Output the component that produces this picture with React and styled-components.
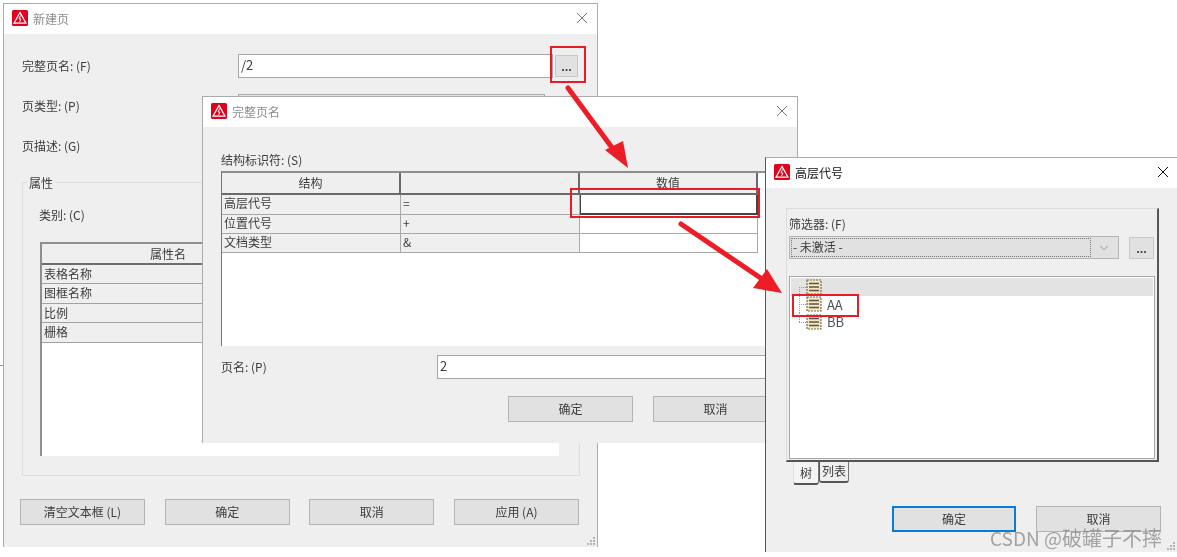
import styled, { createGlobalStyle } from 'styled-components'
import { ChevronDown } from 'lucide-react'

const GlobalStyle = createGlobalStyle`
  html, body {
    margin: 0;
    background: #fff;
  }
  body {
    font-family: "Noto Sans CJK SC", "Liberation Sans", sans-serif;
    font-size: 12px;
    color: #3c3c3c;
  }
`

const Logo = () => (
  <LogoSvg viewBox="0 0 16 16">
    <rect width="16" height="16" rx="1.5" fill="#e2001a" />
    <path d="M8 2.4 14 13.2H2Z" fill="none" stroke="#fff" strokeWidth="1.2" />
    <path d="M8.6 5.4 7 9h2l-1.4 3" fill="none" stroke="#fff" strokeWidth="0.9" />
  </LogoSvg>
)

const CloseIcon = ({ active }) => (
  <CloseSvg viewBox="0 0 12 12">
    <path d="M1 1 11 11M11 1 1 11" stroke={active ? '#111' : '#777'} strokeWidth="1" fill="none" />
  </CloseSvg>
)

const Grip = () => (
  <GripSvg viewBox="0 0 10 10">
    <path d="M8 1h2v2H8zM5 4h2v2H5zM8 4h2v2H8zM2 7h2v2H2zM5 7h2v2H5zM8 7h2v2H8z" fill="#b4b4b4" />
  </GripSvg>
)

const TreeIcon = () => (
  <TreeSvg viewBox="0 0 16 16">
    <rect x="1" y="1" width="14" height="14" fill="#f7e6b8" stroke="#6b6b6b" strokeDasharray="2 1" strokeWidth="1.2" />
    <path d="M3 4.5h10M3 8h10M3 11.5h10" stroke="#555" strokeWidth="1.5" />
  </TreeSvg>
)

const Title = ({ text, active }) => (
  <TitleBar $active={active}>
    <Logo />
    <TitleText $active={active}>{text}</TitleText>
    <CloseIcon active={active} />
  </TitleBar>
)

const App = () => {
  return (
    <>
      <GlobalStyle />
      <Desktop>
        <StrayLine />

        <Window $left={3} $top={3} $width={595} $height={544} $edge="#ababab">
          <Title text="新建页" />
          <PageForm>
            <FormRow>
              <span>完整页名: (F)</span>
              <InputWrap>
                <TextBox $width={315}>/2</TextBox>
                <DotsButton $left={2} $width={23}>...</DotsButton>
              </InputWrap>
            </FormRow>
            <FormRow>
              <span>页类型: (P)</span>
              <InputWrap>
                <TextBox $width={307} $disabled />
              </InputWrap>
            </FormRow>
            <FormRow>
              <span>页描述: (G)</span>
            </FormRow>
            <Group>
              <legend>属性</legend>
              <CategoryLabel>类别: (C)</CategoryLabel>
              <AttrTable>
                <AttrHead>属性名</AttrHead>
                {['表格名称', '图框名称', '比例', '栅格'].map((name) => (
                  <AttrRow key={name}>{name}</AttrRow>
                ))}
              </AttrTable>
            </Group>
            <FooterButtons>
              <Button>清空文本框 (L)</Button>
              <Button>确定</Button>
              <Button>取消</Button>
              <Button>应用 (A)</Button>
            </FooterButtons>
          </PageForm>
          <Grip />
        </Window>

        <Window $left={202} $top={96} $width={596} $height={347} $edge="#ababab">
          <Title text="完整页名" />
          <NameForm>
            <FieldLabel>结构标识符: (S)</FieldLabel>
            <StructTable>
              <StructGrid>
                <HeadCell>结构</HeadCell>
                <HeadCell />
                <HeadCell>数值</HeadCell>
                <BodyCell>高层代号</BodyCell>
                <BodyCell>=</BodyCell>
                <ValueCell $selected />
                <BodyCell>位置代号</BodyCell>
                <BodyCell>+</BodyCell>
                <ValueCell />
                <BodyCell>文档类型</BodyCell>
                <BodyCell>&amp;</BodyCell>
                <ValueCell />
              </StructGrid>
            </StructTable>
            <PageNameRow>
              <span>页名: (P)</span>
              <TextBox $width={340}>2</TextBox>
            </PageNameRow>
            <NameButtons>
              <Button>确定</Button>
              <Button>取消</Button>
            </NameButtons>
          </NameForm>
        </Window>

        <Window $left={765} $top={157} $width={413} $height={395} $edge="#555">
          <Title text="高层代号" active />
          <TabPane>
            <FieldLabel>筛选器: (F)</FieldLabel>
            <FilterRow>
              <Combo>
                <ComboValue>- 未激活 -</ComboValue>
                <ChevronDown size={14} color="#8a8a8a" strokeWidth={1.5} />
              </Combo>
              <DotsButton $left={10} $width={25}>...</DotsButton>
            </FilterRow>
            <Tree>
              <TreeRow $selected>
                <Connector $pos="first" />
                <TreeIcon />
              </TreeRow>
              <TreeRow>
                <Connector $pos="middle" />
                <TreeIcon />
                AA
              </TreeRow>
              <TreeRow>
                <Connector $pos="last" />
                <TreeIcon />
                BB
              </TreeRow>
            </Tree>
          </TabPane>
          <TabStrip>
            <Tab $active>树</Tab>
            <Tab>列表</Tab>
          </TabStrip>
          <DialogButtons>
            <Button $primary>确定</Button>
            <Button>取消</Button>
          </DialogButtons>
          <Grip />
        </Window>

        <Markup viewBox="0 0 1177 557">
          <g fill="none" stroke="#e81c26" strokeWidth="2">
            <rect x="551" y="47" width="34" height="35" />
            <rect x="571" y="189" width="188" height="28" />
            <rect x="793" y="295" width="65" height="21" />
          </g>
          <path d="M568 88 616 153" stroke="#ee1c25" strokeWidth="5" strokeLinecap="round" />
          <path d="M628 168 605 150 623 141Z" fill="#ee1c25" />
          <path d="M681 224 765 281" stroke="#ee1c25" strokeWidth="5" strokeLinecap="round" />
          <path d="M782 293 753 288 767 269Z" fill="#ee1c25" />
        </Markup>

        <Watermark>
          CSDN @<WatermarkCjk>破罐子不摔</WatermarkCjk>
        </Watermark>
      </Desktop>
    </>
  )
}

export default App

const Desktop = styled.div`
  position: relative;
  width: 1177px;
  height: 557px;
  overflow: hidden;
  background: #fff;
  filter: blur(0.3px);
`

const StrayLine = styled.div`
  position: absolute;
  left: 0;
  top: 365px;
  width: 3px;
  height: 1px;
  background: #999;
`

const Window = styled.section`
  position: absolute;
  left: ${(p) => p.$left}px;
  top: ${(p) => p.$top}px;
  width: ${(p) => p.$width}px;
  height: ${(p) => p.$height}px;
  box-sizing: border-box;
  display: flex;
  flex-direction: column;
  background: #efefef;
  border: 1px solid ${(p) => p.$edge};
  border-top-color: #ababab;
  border-bottom: none;
`

const TitleBar = styled.header`
  flex: none;
  box-sizing: border-box;
  height: 30px;
  display: flex;
  align-items: center;
  padding: 0 ${(p) => (p.$active ? '8px' : '9px')} 2px 8px;
  background: #fff;
`

const LogoSvg = styled.svg`
  flex: none;
  width: 16px;
  height: 16px;
`

const TitleText = styled.span`
  flex: 1;
  margin-left: 5px;
  font-size: 12px;
  color: ${(p) => (p.$active ? '#111' : '#8c8c8c')};
`

const CloseSvg = styled.svg`
  flex: none;
  width: 12px;
  height: 12px;
`

const GripSvg = styled.svg`
  position: absolute;
  right: 2px;
  bottom: 1px;
  width: 10px;
  height: 10px;
`

const PageForm = styled.div`
  display: flex;
  flex-direction: column;
  padding: 20px 0 0 18px;
`

const FormRow = styled.div`
  display: grid;
  grid-template-columns: 216px 1fr;
  align-items: center;
  height: 24px;
  margin-bottom: 16px;

  > span {
    margin-top: -2px;
  }
`

const InputWrap = styled.div`
  display: flex;
  align-items: center;
`

const TextBox = styled.div`
  box-sizing: border-box;
  width: ${(p) => p.$width}px;
  height: 24px;
  line-height: 20px;
  padding: 0 2px;
  background: ${(p) => (p.$disabled ? '#e6e6e6' : '#fff')};
  border: 1px solid #a6a6a6;
  font-size: 13px;
`

const DotsButton = styled.div`
  box-sizing: border-box;
  flex: none;
  width: ${(p) => p.$width}px;
  height: 22px;
  margin-left: ${(p) => p.$left}px;
  background: #e1e1e1;
  border: 1px solid #c8c8c8;
  text-align: center;
  line-height: 20px;
  font-size: 11px;
  font-weight: 700;
`

const Group = styled.fieldset`
  box-sizing: border-box;
  width: 558px;
  height: 302px;
  margin: 0;
  padding: 16px 0 0 17px;
  border: 1px solid #dddddd;

  legend {
    margin-left: -13px;
    padding: 0 2px;
    font-size: 12px;
    line-height: 17px;
  }
`

const CategoryLabel = styled.div`
  margin-left: -1px;
  line-height: 15px;
`

const AttrTable = styled.div`
  box-sizing: border-box;
  width: 519px;
  height: 214px;
  margin-top: 20px;
  background: #fff;
  border-left: 2px solid #8e8e8e;
  border-top: 2px solid #8e8e8e;
`

const AttrHead = styled.div`
  box-sizing: border-box;
  height: 21px;
  width: 252px;
  line-height: 19px;
  text-align: center;
  background: #efefef;
  border-bottom: 2px solid #6f6f6f;
`

const AttrRow = styled.div`
  box-sizing: border-box;
  height: 19.4px;
  line-height: 17px;
  padding-left: 2px;
  background: #efefef;
  border-bottom: 1px solid #a2a2a2;
`

const FooterButtons = styled.div`
  display: flex;
  justify-content: space-between;
  width: 559px;
  margin: 23px 0 0 -2px;
`

const Button = styled.div`
  box-sizing: border-box;
  width: ${(p) => (p.$primary ? '124px' : '125px')};
  height: 26px;
  text-align: center;
  background: #e1e1e1;
  border: ${(p) => (p.$primary ? '2px solid #0a7cd8' : '1px solid #b4b4b4')};
  line-height: ${(p) => (p.$primary ? '22px' : '24px')};
`

const NameForm = styled.div`
  display: flex;
  flex-direction: column;
  padding: 25px 0 0 18px;
`

const FieldLabel = styled.div`
  line-height: 15px;
  margin-bottom: 2px;
`

const StructTable = styled.div`
  box-sizing: border-box;
  width: 576px;
  height: 175px;
  margin-top: 2px;
  background: #fff;
  border-left: 1px solid #777;
  border-top: 2px solid #8e8e8e;
`

const StructGrid = styled.div`
  display: grid;
  grid-template-columns: 179px 179px 178px;
  grid-template-rows: 22px 20px 19px 19px;
`

const HeadCell = styled.div`
  box-sizing: border-box;
  line-height: 19px;
  text-align: center;
  background: #efefef;
  border-right: 2px solid #6a6a6a;
  border-bottom: 2px solid #6a6a6a;
`

const BodyCell = styled.div`
  box-sizing: border-box;
  line-height: 15px;
  padding-left: 2px;
  background: #efefef;
  border-right: 1px solid #a8a8a8;
  border-bottom: 1px solid #a8a8a8;
`

const ValueCell = styled.div`
  box-sizing: border-box;
  background: #fff;
  border-right: ${(p) => (p.$selected ? '2px solid #444' : '1px solid #a8a8a8')};
  border-bottom: ${(p) => (p.$selected ? '2px solid #444' : '1px solid #a8a8a8')};
  border-left: ${(p) => (p.$selected ? '1px solid #444' : 'none')};
`

const PageNameRow = styled(FormRow)`
  margin: 9px 0 0;
`

const NameButtons = styled.div`
  display: flex;
  gap: 20px;
  margin: 17px 0 0 287px;
`

const TabPane = styled.div`
  box-sizing: border-box;
  width: 373px;
  height: 254px;
  margin: 20px 0 0 20px;
  padding: 7px 0 0 2px;
  border-top: 1px solid #dcdcdc;
  border-left: 1px solid #dcdcdc;
  border-right: 2px solid #555;
  border-bottom: 2px solid #555;
`

const FilterRow = styled.div`
  display: flex;
  align-items: center;
  margin-top: 5px;
`

const Combo = styled.div`
  box-sizing: border-box;
  flex: none;
  width: 330px;
  height: 23px;
  display: flex;
  align-items: center;
  padding: 1px 7px 1px 1px;
  background: #e1e1e1;
  border: 1px solid #b4b4b4;
`

const ComboValue = styled.div`
  box-sizing: border-box;
  flex: 1;
  height: 100%;
  margin-right: 6px;
  padding-left: 1px;
  line-height: 15px;
  border: 1px dotted #777;
`

const Tree = styled.div`
  box-sizing: border-box;
  width: 366px;
  height: 183px;
  margin-top: 17px;
  padding: 1px;
  background: #fff;
  border: 1px solid #a6a6a6;
`

const TreeRow = styled.div`
  display: flex;
  align-items: center;
  gap: 5px;
  height: 17.5px;
  padding-left: 8px;
  background: ${(p) => (p.$selected ? '#e3e3e3' : 'transparent')};
  color: #4a5260;
  font-size: 13px;
`

const TreeSvg = styled.svg`
  flex: none;
  width: 16px;
  height: 16px;
  margin-left: -7px;
`

const Connector = styled.span`
  position: relative;
  flex: none;
  width: 9px;
  align-self: stretch;

  &::before {
    content: '';
    position: absolute;
    left: 0;
    top: ${(p) => (p.$pos === 'first' ? '50%' : '0')};
    bottom: ${(p) => (p.$pos === 'last' ? '50%' : '0')};
    border-left: 1px dotted #999;
  }

  &::after {
    content: '';
    position: absolute;
    left: 0;
    right: 0;
    top: 50%;
    border-top: 1px dotted #999;
  }
`

const TabStrip = styled.div`
  display: flex;
  align-items: flex-start;
  height: 23px;
  padding-left: 27px;
`

const Tab = styled.div`
  box-sizing: border-box;
  height: ${(p) => (p.$active ? '23px' : '21px')};
  padding: ${(p) => (p.$active ? '2px 6px 0' : '0 2px')};
  line-height: 17px;
  background: ${(p) => (p.$active ? '#f4f4f4' : '#efefef')};
  border-left: 1px solid ${(p) => (p.$active ? '#e0e0e0' : '#555')};
  border-right: 1px solid #777;
  border-bottom: 2px solid #555;
  border-radius: 0 0 3px 3px;
`

const DialogButtons = styled.div`
  display: flex;
  gap: 20px;
  margin: 21px 0 0 126px;
`

const Markup = styled.svg`
  position: absolute;
  left: 0;
  top: 0;
  width: 1177px;
  height: 557px;
  pointer-events: none;
`

const Watermark = styled.div`
  position: absolute;
  left: 990px;
  top: 528px;
  font-size: 19px;
  line-height: 20px;
  white-space: nowrap;
  color: rgba(120, 120, 120, 0.65);
`

const WatermarkCjk = styled.span`
  font-size: 20px;
`
